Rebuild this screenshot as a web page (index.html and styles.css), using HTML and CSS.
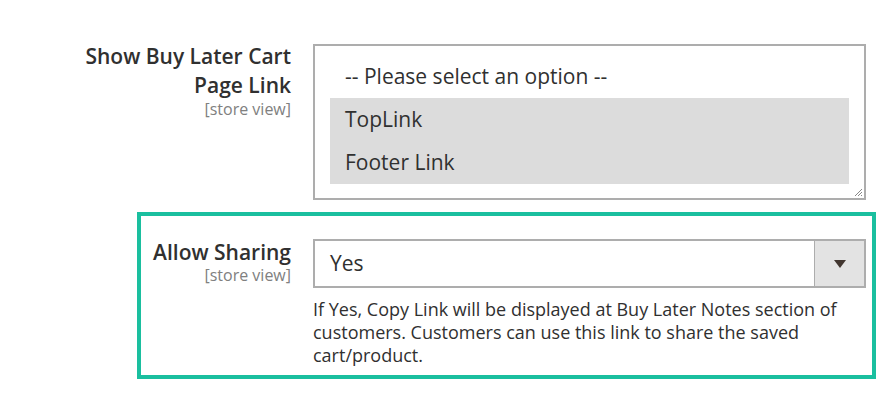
FILE: index.html
```html
<!DOCTYPE html>
<html>
<head>
<meta charset="utf-8">
<link rel="stylesheet" href="styles.css">
</head>
<body>
<div class="page">
  <div class="field field-wide">
    <div class="label">
      <span class="label-text">Show Buy Later Cart Page Link</span>
      <span class="scope">[store view]</span>
    </div>
    <div class="control">
      <div class="multiselect">
        <div class="option">-- Please select an option --</div>
        <div class="option selected">TopLink</div>
        <div class="option selected">Footer Link</div>
        <svg class="grip" width="10" height="10" viewBox="0 0 10 10"><path d="M9 2 L2 9 M9 5 L5 9 M9 8 L8 9" stroke="#888" stroke-width="1" fill="none"/></svg>
      </div>
    </div>
  </div>
  <div class="field highlight">
    <div class="label">
      <span class="label-text">Allow Sharing</span>
      <span class="scope">[store view]</span>
    </div>
    <div class="control">
      <div class="select">
        <span class="value">Yes</span>
        <span class="arrow"><svg width="12" height="8" viewBox="0 0 12 8"><path d="M0 0 H12 L6 8 Z" fill="#41362f"/></svg></span>
      </div>
      <p class="note">If Yes, Copy Link will be displayed at Buy Later Notes section of customers. Customers can use this link to share the saved cart/product.</p>
    </div>
  </div>
</div>
</body>
</html>
```

FILE: styles.css
```css
html, body {
  margin: 0;
  padding: 0;
  background: #fff;
}
body {
  font-family: "Open Sans", "Liberation Sans", sans-serif;
  color: #303030;
}
.page {
  padding: 40px 0 0 137px;
  width: 739px;
}
.field {
  display: grid;
  grid-template-columns: 150px 553px;
  column-gap: 22px;
  border: 4px solid transparent;
}
.field-wide {
  margin-left: -80px;
  grid-template-columns: 230px 553px;
}
.field.highlight {
  border-color: #1abf9f;
  margin-top: 8px;
  padding: 23px 0 8px;
}
.label {
  display: flex;
  flex-direction: column;
  align-items: flex-end;
  text-align: right;
}
.label-text {
  font-weight: 600;
  font-size: 21px;
  line-height: 28px;
  margin-top: -1px;
}
.field-wide .label-text {
  width: 210px;
  line-height: 29px;
  margin-top: -2px;
}
.scope {
  font-size: 16px;
  line-height: 18px;
  color: #808080;
}
.multiselect {
  position: relative;
  box-sizing: border-box;
  height: 156px;
  border: 2px solid #adadad;
  padding: 9px 15px 15px;
}
.option {
  height: 43px;
  line-height: 43px;
  padding-left: 15px;
  font-size: 21px;
}
.option.selected {
  background: #dcdcdc;
}
.grip {
  position: absolute;
  right: 1px;
  bottom: 1px;
}
.select {
  box-sizing: border-box;
  height: 49px;
  border: 2px solid #adadad;
  display: flex;
  align-items: stretch;
}
.value {
  flex: 1;
  padding-left: 15px;
  font-size: 21px;
  line-height: 45px;
}
.arrow {
  width: 49px;
  background: #e3e3e3;
  border-left: 1px solid #adadad;
  display: flex;
  align-items: center;
  justify-content: center;
}
.note {
  margin: 10px 0 0 0;
  font-size: 18px;
  line-height: 23px;
}
```
